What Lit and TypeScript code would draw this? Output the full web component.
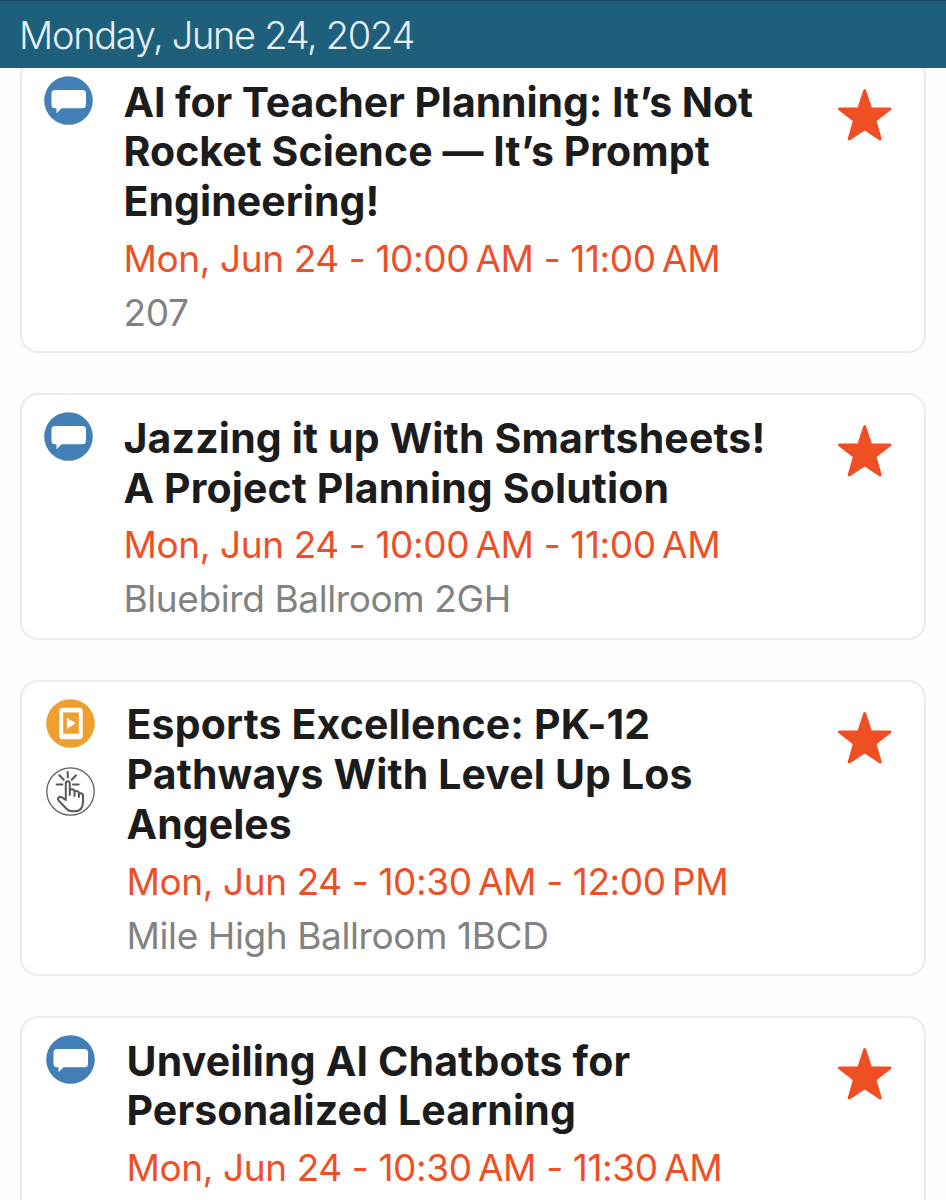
import { LitElement, html, css, svg, nothing } from "lit";
import { customElement, property } from "lit/decorators.js";
import { classMap } from "lit/directives/class-map.js";
import { styleMap } from "lit/directives/style-map.js";

type BadgeKind = "chat" | "video" | "touch";

interface TitleLine {
  text: string;
  tracking: number;
}

interface Session {
  title: TitleLine[];
  time: string;
  room?: string;
  badges: BadgeKind[];
  inset?: boolean;
}

const SESSIONS: Session[] = [
  {
    title: [
      { text: "AI for Teacher Planning: It’s Not", tracking: -0.08 },
      { text: "Rocket Science — It’s Prompt", tracking: 0.06 },
      { text: "Engineering!", tracking: 0.06 },
    ],
    time: "Mon, Jun 24 - 10:00\u202fAM - 11:00\u202fAM",
    room: "207",
    badges: ["chat"],
  },
  {
    title: [
      { text: "Jazzing it up With Smartsheets!", tracking: 0.16 },
      { text: "A Project Planning Solution", tracking: 0.12 },
    ],
    time: "Mon, Jun 24 - 10:00\u202fAM - 11:00\u202fAM",
    room: "Bluebird Ballroom 2GH",
    badges: ["chat"],
  },
  {
    title: [
      { text: "Esports Excellence: PK-12", tracking: 0.16 },
      { text: "Pathways With Level Up Los", tracking: 0.14 },
      { text: "Angeles", tracking: 0.06 },
    ],
    time: "Mon, Jun 24 - 10:30\u202fAM - 12:00\u202fPM",
    room: "Mile High Ballroom 1BCD",
    badges: ["video", "touch"],
    inset: true,
  },
  {
    title: [
      { text: "Unveiling AI Chatbots for", tracking: 0.16 },
      { text: "Personalized Learning", tracking: 0.14 },
    ],
    time: "Mon, Jun 24 - 10:30\u202fAM - 11:30\u202fAM",
    badges: ["chat"],
    inset: true,
  },
];

@customElement("session-badge")
class SessionBadge extends LitElement {
  @property() kind: BadgeKind = "chat";

  static styles = css`
    :host { display: block; width: 49px; height: 49px; }
    .icon { display: block; width: 49px; height: 49px; }
  `;

  private art() {
    if (this.kind === "chat") {
      return svg`
        <circle cx="24.5" cy="24.5" r="24.3" fill="#437fb7"/>
        <path d="M11 14H38.500Q42 14 42 17.500V28.800Q42 32.300 38.500 32.300H17.500L12.500 37.300V32.300H11Q7.500 32.300 7.500 28.800V17.500Q7.500 14 11 14Z" fill="#fff"/>`;
    }
    if (this.kind === "video") {
      return svg`
        <circle cx="24.500" cy="24.500" r="24.300" fill="#ed9f2f"/>
        <path fill-rule="evenodd" fill="#fff" d="M16.500 8.700H33.500Q36.700 8.700 36.700 11.900V37Q36.700 40.200 33.500 40.200H16.500Q13.300 40.200 13.300 37V11.900Q13.300 8.700 16.500 8.700ZM17.200 13.400V34.700H32.800V13.400Z"/>
        <path fill="#fff" d="M20.900 18.400L29.700 24.200L20.900 30Z"/>`;
    }
    return svg`
      <circle cx="24.500" cy="24.500" r="23.700" fill="#fff" stroke="#606060" stroke-width="1.300"/>
      <g fill="none" stroke="#585858" stroke-width="2" stroke-linecap="round" stroke-linejoin="round">
        <path d="M21.700 5V10.500M13.400 8.200L17.700 12.800M30 8.200L25.700 12.800M10.700 17.500H16.400M27 17.500H32.700"/>
        <path d="M19.800 33V16.500Q19.800 14.300 21.800 14.300Q23.800 14.300 23.800 16.500V28V23.600Q24.200 22.200 26 22.300Q28.500 22.500 28.500 25V29V25Q29.200 23.700 30.800 24Q32.900 24.300 32.900 26.500V30V27Q33.700 25.900 35 26.200Q37 26.700 37 29V34.500Q37 44.300 28.800 44.300H26.500Q23 44.300 20.700 42L13 34Q11.200 31.700 12.800 30.300Q14.300 29.300 16 30.400L19.800 33"/>
      </g>`;
  }

  render() {
    return html`<svg class="icon" viewBox="0 0 49 49">${this.art()}</svg>`;
  }
}

@customElement("session-card")
class SessionCard extends LitElement {
  @property({ attribute: false }) session!: Session;

  static styles = css`
    :host { display: block; }
    .card {
      box-sizing: border-box;
      display: flex;
      align-items: flex-start;
      min-height: 246px;
      border: 2px solid #ebebeb;
      border-radius: 18px;
      padding: 18.500px 31px 11.300px 22px;
      background: #fff;
    }
    .card.inset { padding-left: 24px; }
    .badges { display: flex; flex-direction: column; gap: 19px; width: 49px; margin-top: -1.300px; }
    .body { flex: 1; margin-left: 30.500px; white-space: nowrap; }
    .inset .body { margin-left: 31.500px; }
    .title {
      margin: 0;
      font-size: 41px;
      line-height: 49.800px;
      font-weight: 700;
      color: #1c1c1c;
    }
    .line { display: block; }
    .time, .room { font-size: 37px; line-height: 54px; font-weight: 400; letter-spacing: -0.4px; }
    .time { margin-top: 5.100px; color: #ee4f27; }
    .room { color: #828282; }
    .star { display: block; width: 56px; height: 54px; margin-top: 10.500px; }
  `;

  render() {
    const s = this.session;
    return html`
      <article class=${classMap({ card: true, inset: !!s.inset })}>
        <div class="badges">${s.badges.map((k) => html`<session-badge kind=${k}></session-badge>`)}</div>
        <div class="body">
          <h2 class="title">
            ${s.title.map((t) => html`<span class="line" style=${styleMap({ letterSpacing: `${t.tracking}px` })}>${t.text}</span>`)}
          </h2>
          <div class="time">${s.time}</div>
          ${s.room ? html`<div class="room">${s.room}</div>` : nothing}
        </div>
        <svg class="star" viewBox="0 0 56 54">
          <path d="M27.700 2.700L33.700 20.900H53L37.900 32.500L43.200 51L27.700 40.700L12.200 51L17.500 32.500L2.400 20.900H21.700Z"
            fill="#f04e23" stroke="#f04e23" stroke-width="3" stroke-linejoin="round"/>
        </svg>
      </article>`;
  }
}

@customElement("app-root")
class AppRoot extends LitElement {
  static styles = css`
    :host {
      display: flex;
      flex-direction: column;
      height: 1200px;
      overflow: hidden;
      background: #fefefe;
      font-family: Inter, "Liberation Sans", sans-serif;
    }
    .day {
      box-sizing: border-box;
      flex: none;
      height: 68px;
      padding: 3px 19px 0;
      border-top: 1px solid #174e64;
      background: #1e5f7b;
      color: #e6f0f5;
      font-size: 38px;
      line-height: 62px;
      font-weight: 300;
      letter-spacing: -1.300px;
      white-space: nowrap;
    }
    .viewport { flex: 1; min-height: 0; overflow: hidden; }
    .list {
      display: flex;
      flex-direction: column;
      gap: 40px;
      margin-top: -11px;
      padding: 0 20px;
    }
  `;

  render() {
    return html`
      <header class="day">Monday, June 24, 2024</header>
      <main class="viewport">
        <div class="list">${SESSIONS.map((s) => html`<session-card .session=${s}></session-card>`)}</div>
      </main>`;
  }
}
